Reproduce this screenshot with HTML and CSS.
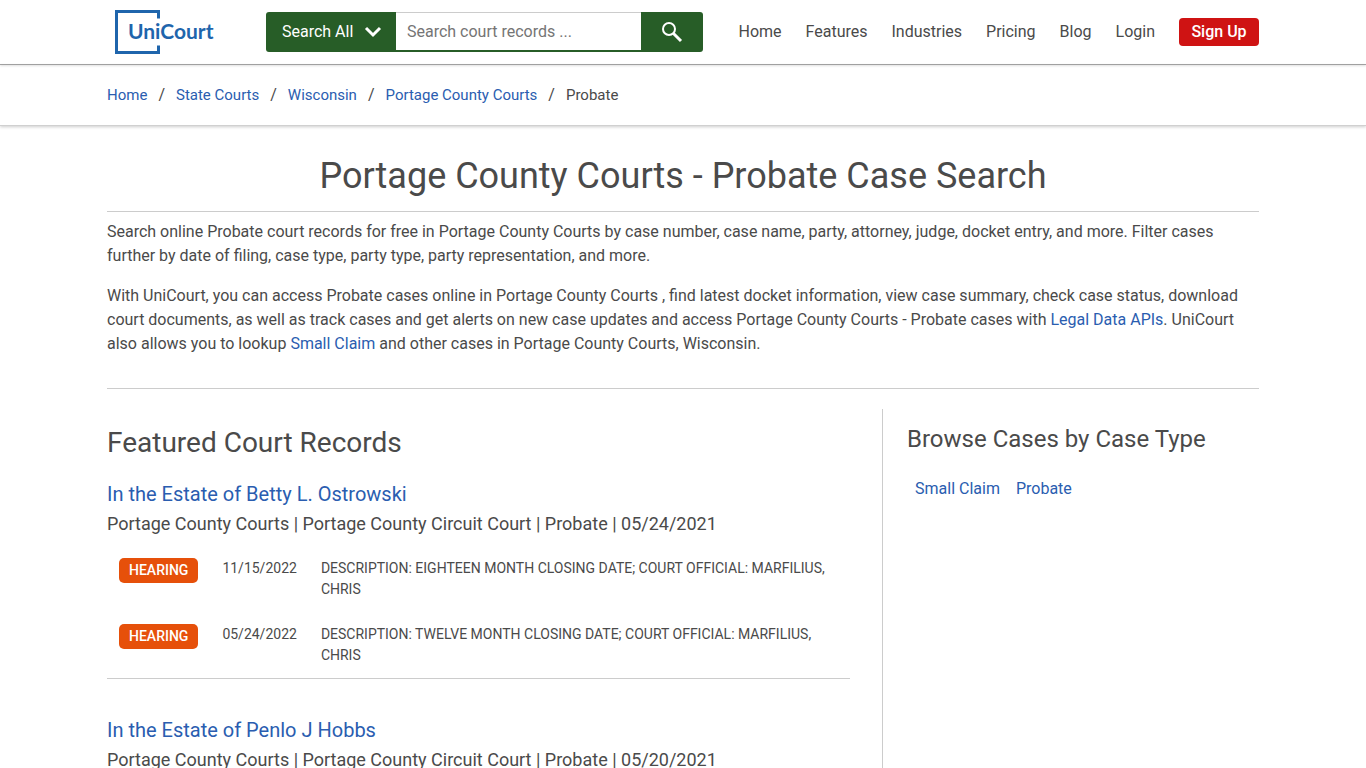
FILE: index.html
```html
<!DOCTYPE html>
<html lang="en">
<head>
    <meta charset="UTF-8">
    <meta name="viewport" content="width=device-width, initial-scale=1.0">
    <title>Portage County Courts - Probate Case Search | UniCourt</title>
    <link rel="stylesheet" href="styles.css">
</head>
<body>
<header class="header">
    <div class="container header-row">
        <a class="logo" href="#" aria-label="UniCourt">
            <svg width="104" height="44" viewBox="0 0 104 44">
                <path d="M43.500 8.500V1.500H1.500V42.500H43.500V35.500" fill="none" stroke="#1f65ac" stroke-width="3"/>
                <text class="logo-text" x="13" y="29">UniCourt</text>
            </svg>
        </a>
        <form class="search" action="#">
            <div class="search-type">
                <select class="search-select" aria-label="Search type">
                    <option>Search All</option>
                    <option>Case Number</option>
                    <option>Party</option>
                    <option>Attorney</option>
                    <option>Judge</option>
                </select>
                <svg class="chevron" width="18" height="12" viewBox="0 0 18 12">
                    <path d="M2 2L9 9L16 2" fill="none" stroke="#fff" stroke-width="3"/>
                </svg>
            </div>
            <input class="search-input" type="text" placeholder="Search court records ..." aria-label="Search court records">
            <button class="search-btn" type="submit" aria-label="Search">
                <svg width="22" height="22" viewBox="0 0 22 22" fill="none" stroke="#fff">
                    <circle cx="8" cy="8" r="6" stroke-width="2"/>
                    <path d="M12.500 12.500L20 20" stroke-width="3"/>
                </svg>
            </button>
        </form>
        <nav class="nav">
            <a href="#">Home</a>
            <a href="#">Features</a>
            <a href="#">Industries</a>
            <a href="#">Pricing</a>
            <a href="#">Blog</a>
            <a href="#">Login</a>
            <a class="signup" href="#">Sign Up</a>
        </nav>
    </div>
</header>

<nav class="breadcrumb" aria-label="Breadcrumb">
    <ol class="container breadcrumb-list">
        <li><a href="#">Home</a></li>
        <li><a href="#">State Courts</a></li>
        <li><a href="#">Wisconsin</a></li>
        <li><a href="#">Portage County Courts</a></li>
        <li>Probate</li>
    </ol>
</nav>

<main class="container">
    <h1 class="title">Portage County Courts - Probate Case Search</h1>
    <div class="intro">
        <p>Search online Probate court records for free in Portage County Courts by case number, case name, party, attorney, judge, docket entry, and more. Filter cases further by date of filing, case type, party type, party representation, and more.</p>
        <p>With UniCourt, you can access Probate cases online in Portage County Courts , find latest docket information, view case summary, check case status, download court documents, as well as track cases and get alerts on new case updates and access Portage County Courts - Probate cases with <a href="#">Legal Data APIs</a>. UniCourt also allows you to lookup <a href="#">Small Claim</a> and other cases in Portage County Courts, Wisconsin.</p>
    </div>

    <div class="columns">
        <section class="records">
            <h2>Featured Court Records</h2>
            <article class="case">
                <h3><a href="#">In the Estate of Betty L. Ostrowski</a></h3>
                <p class="case-info">Portage County Courts | Portage County Circuit Court | Probate | 05/24/2021</p>
                <table class="hearings">
                    <tr>
                        <td><span class="badge">HEARING</span></td>
                        <td>11/15/2022</td>
                        <td>DESCRIPTION: EIGHTEEN MONTH CLOSING DATE; COURT OFFICIAL: MARFILIUS, CHRIS</td>
                    </tr>
                    <tr>
                        <td><span class="badge">HEARING</span></td>
                        <td>05/24/2022</td>
                        <td>DESCRIPTION: TWELVE MONTH CLOSING DATE; COURT OFFICIAL: MARFILIUS, CHRIS</td>
                    </tr>
                </table>
            </article>
            <article class="case">
                <h3><a href="#">In the Estate of Penlo J Hobbs</a></h3>
                <p class="case-info">Portage County Courts | Portage County Circuit Court | Probate | 05/20/2021</p>
            </article>
        </section>
        <aside class="browse">
            <h2>Browse Cases by Case Type</h2>
            <div class="browse-links">
                <a href="#">Small Claim</a>
                <a href="#">Probate</a>
            </div>
        </aside>
    </div>
</main>
</body>
</html>
```
FILE: styles.css
```css
* { box-sizing: border-box; }
body { margin: 0; font-family: Roboto, "Liberation Sans", sans-serif; font-size: 16px; line-height: 24px; color: #4a4a4a; background: #fff; }
a { color: #2a5db0; text-decoration: none; }
h1, h2, h3, p { margin: 0; font-weight: 400; }

.container { max-width: 1200px; margin: 0 auto; padding: 0 24px; }

.header { border-bottom: 1px solid #a6a6a6; box-shadow: 0 1px 2px rgba(0, 0, 0, 0.12); }
.header-row { display: flex; align-items: center; height: 64px; }
.logo { display: flex; margin-left: 8px; }
.logo-text { font-family: Lato, sans-serif; font-size: 21px; font-weight: 700; fill: #1f65ac; }

.search { display: flex; height: 40px; margin-left: 47px; }
.search-type { display: grid; align-items: center; width: 130px; background: #275d27; border-radius: 3px 0 0 3px; }
.search-select {
    grid-area: 1 / 1;
    height: 40px;
    padding: 0 16px;
    border: 0;
    background: none;
    color: #fff;
    font: inherit;
    appearance: none;
}
.search-select option { color: #4a4a4a; }
.chevron { grid-area: 1 / 1; justify-self: end; margin-right: 14px; pointer-events: none; }
.search-input {
    width: 245px;
    padding: 0 11px;
    border: 0;
    border-top: 1px solid #ccc;
    border-bottom: 2px solid #275d27;
    border-radius: 0;
    font: inherit;
    color: #4a4a4a;
}
.search-input::placeholder { color: #757575; }
.search-btn { display: flex; align-items: center; justify-content: center; width: 62px; padding: 0; border: 0; border-radius: 0 3px 3px 0; background: #275d27; }

.nav { display: flex; align-items: center; gap: 24px; margin-left: auto; }
.nav a { color: #4a4a4a; }
.nav .signup { width: 80px; padding: 2px 0; border-radius: 4px; background: #cf1313; color: #fff; font-weight: 500; text-align: center; }

.breadcrumb { padding: 18px 0; border-bottom: 1px solid #d0d0d0; box-shadow: 0 1px 3px rgba(0, 0, 0, 0.2); }
.breadcrumb-list { display: flex; list-style: none; font-size: 15px; }
.breadcrumb li + li::before { content: "/"; margin: 0 11px; font-size: 16px; }

.title { padding: 28px 0 13px; border-bottom: 1px solid #ccc; font-size: 36px; line-height: 44px; text-align: center; }
.intro { padding: 8px 0 32px; border-bottom: 1px solid #ccc; }
.intro p + p { margin-top: 16px; }

.columns { display: flex; margin-top: 20px; }
.records { flex: 1; padding: 16px 32px 0 0; }
.records h2 { font-size: 28px; line-height: 36px; }
.case { margin-top: 17px; }
.case + .case { margin-top: 35px; }
.case h3 { font-size: 20px; line-height: 32px; }
.case-info { font-size: 18px; line-height: 28px; }

.hearings { width: 100%; margin-top: 8px; border-collapse: collapse; border-bottom: 1px solid #ccc; font-size: 14px; line-height: 21px; }
.hearings td { padding: 12px; vertical-align: top; }
.badge { display: block; padding: 2px 10px; border-radius: 5px; background: #e6500a; color: #fff; font-weight: 500; }

.browse { width: 377px; min-height: 420px; padding: 14px 0 0 24px; border-left: 1px solid #ccc; }
.browse h2 { font-size: 24px; line-height: 32px; }
.browse-links { display: flex; gap: 16px; padding: 22px 8px; }
```
